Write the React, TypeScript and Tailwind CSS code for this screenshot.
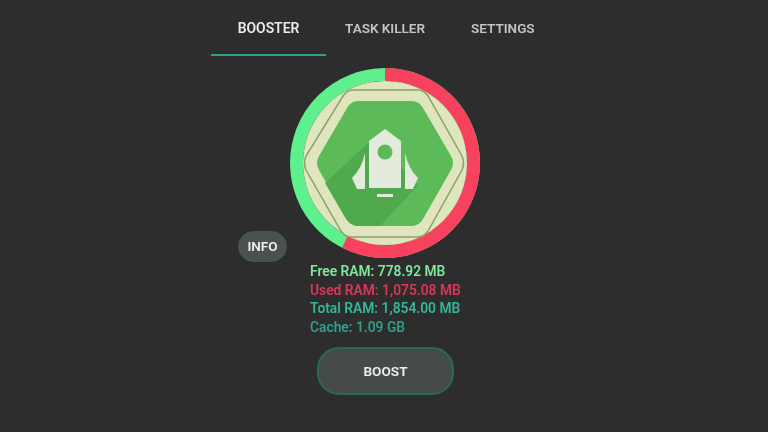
const RED = "#f8405f";
const GREEN = "#5ff08e";
const PALE = "#e3ebdc";

function Gauge() {
  // used share of the ring, clockwise from the top
  const r = 88.5;
  const usedDeg = 207;
  const rad = (usedDeg * Math.PI) / 180;
  const ex = 95 + r * Math.sin(rad);
  const ey = 95 - r * Math.cos(rad);
  return (
    <svg width="190" height="190" viewBox="0 0 190 190" className="block shrink-0">
      <circle cx="95" cy="95" r="95" fill="#171a18" opacity="0.5" />
      <circle cx="95" cy="95" r={r} fill="none" stroke={GREEN} strokeWidth="13" />
      <path d={`M95 ${95 - r} A${r} ${r} 0 1 1 ${ex} ${ey}`} fill="none" stroke={RED} strokeWidth="13" />
      <circle cx="95" cy="95" r="82" fill="#dfe6bd" />
      <path
        d="M63 22 L128 22 Q134 22 138 28 L172 88 Q175 95 172 102 L138 163 Q134 169 128 169 L61 169 Q55 169 51 163 L16 102 Q13 95 16 88 L53 28 Q57 22 63 22 Z"
        fill="#dfe6bd"
        stroke="#8f9f68"
        strokeWidth="1.5"
      />
      <path
        d="M68 33 L122 33 Q129 33 133 40 L161 88 Q165 95 161 102 L133 151 Q129 158 122 158 L68 158 Q61 158 57 151 L29 102 Q25 95 29 88 L57 40 Q61 33 68 33 Z"
        fill="#5cbb58"
      />
      <path d="M78 75 L35 115 L56 151 Q61 158 68 158 L90 158 L128 117 L111 100 L111 75 Z" fill="#4fa94d" />
      <path d="M95 61 L111 73 L111 120 L79 120 L79 73 Z" fill={PALE} />
      <circle cx="95" cy="84" r="7.5" fill="#5cbb58" />
      <path d="M75 85 Q72 100 62 110 L67 121 L75 121 Z" fill={PALE} />
      <path d="M115 85 Q118 100 128 110 L123 121 L115 121 Z" fill={PALE} />
      <rect x="87" y="126" width="16" height="3" fill={PALE} />
    </svg>
  );
}

export default function App() {
  return (
    <div className="w-[768px] h-[432px] overflow-hidden bg-[#2d2d2d] font-['Roboto',sans-serif] blur-[0.4px]">
      <nav className="flex h-[56px] pl-[211px]">
        <div className="w-[115px] h-[56px] pt-[19px] text-center text-[13.9px] leading-[18px] font-semibold text-[#ececec] border-b-2 border-[#2f9f8c]">
          BOOSTER
        </div>
        <div className="ml-[19px] pt-[19px] text-[13.5px] leading-[18px] font-semibold text-[#c4c4c4]">
          TASK KILLER
        </div>
        <div className="ml-[46px] pt-[19px] text-[13.5px] leading-[18px] font-semibold text-[#c4c4c4]">
          SETTINGS
        </div>
      </nav>

      <div className="flex items-end mt-[12px] pl-[238px] gap-[3px]">
        <button className="w-[49px] h-[31px] mb-[-4px] rounded-full bg-[#4b524e] border border-[#3f5a50] text-[13.5px] font-semibold text-[#f0f0f0]">
          INFO
        </button>
        <Gauge />
      </div>

      <div className="mt-[4px] ml-[310px] text-[13.8px] leading-[18.7px] font-semibold">
        <div className="text-[#7fe8a0]">Free RAM: 778.92 MB</div>
        <div className="text-[#d8385c]">Used RAM: 1,075.08 MB</div>
        <div className="text-[#35b79a]">Total RAM: 1,854.00 MB</div>
        <div className="text-[#2f9f8c]">Cache: 1.09 GB</div>
      </div>

      <button className="block mt-[10px] ml-[317px] w-[137px] h-[48px] rounded-[22px] bg-[#454c48] border-2 border-[#2b6a52] text-[13.6px] font-semibold text-[#f0f0f0]">
        BOOST
      </button>
    </div>
  );
}
